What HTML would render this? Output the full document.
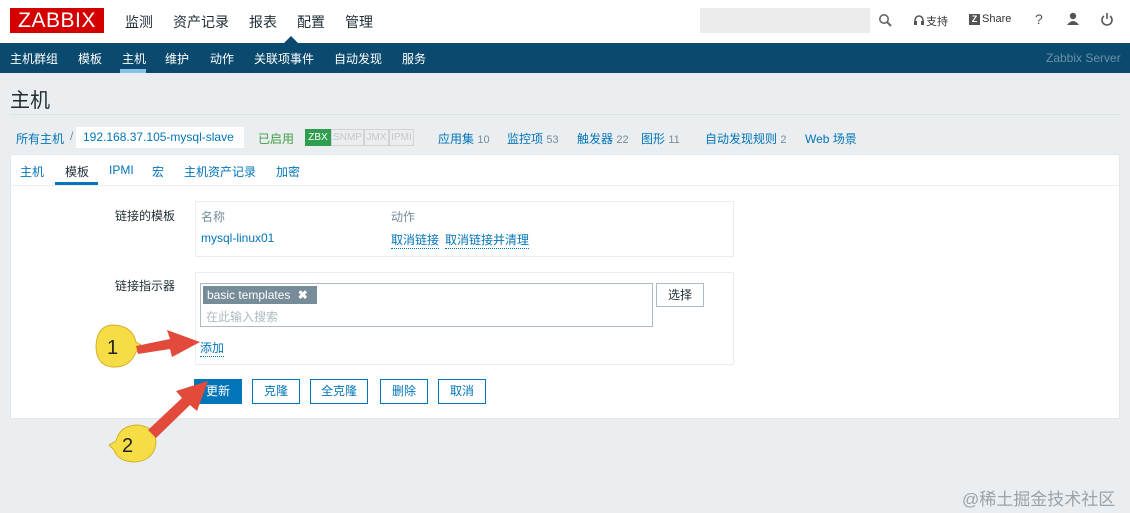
<!DOCTYPE html>
<html><head><meta charset="utf-8"><style>
*{margin:0;padding:0;box-sizing:border-box}
body{width:1130px;height:513px;background:#ebeef0;font-family:"Liberation Sans","Noto Sans CJK SC",sans-serif;font-size:12px;color:#1f2c33;position:relative;overflow:hidden}
.a{position:absolute}
.top{left:0;top:0;width:1130px;height:43px;background:#fff}
.logo{left:10px;top:8px;width:94px;height:25px;background:#d40000;color:#fff;font-size:21px;line-height:25px;text-align:center;letter-spacing:0.5px}
.mm{top:12px;font-size:14px;color:#1f2c33}
.nav{left:0;top:43px;width:1130px;height:30px;background:#0b4a6f}
.nv{top:50px;font-size:12px;color:#fff}
.blue{color:#0275b8}
.gray{color:#768d99}
.btn{top:379px;height:25px;border:1px solid #0275b8;color:#0275b8;background:#fff;font-size:12px;line-height:23px;text-align:center}
.lbl{font-size:12px;color:#1f2c33}
</style></head><body>
<div class="a top"></div>
<div class="a logo">ZABBIX</div>
<div class="a mm" style="left:125px">监测</div>
<div class="a mm" style="left:173px">资产记录</div>
<div class="a mm" style="left:249px">报表</div>
<div class="a mm" style="left:297px">配置</div>
<div class="a mm" style="left:345px">管理</div>
<div class="a" style="left:284px;top:36px;width:0;height:0;border-left:7px solid transparent;border-right:7px solid transparent;border-bottom:7px solid #0b4a6f"></div>
<div class="a" style="left:700px;top:8px;width:170px;height:25px;background:#ebebeb"></div>
<svg class="a" style="left:878px;top:13px" width="14" height="14"><circle cx="6" cy="6" r="4.2" stroke="#666" stroke-width="1.6" fill="none"/><line x1="9" y1="9" x2="13" y2="13" stroke="#666" stroke-width="2"/></svg>
<svg class="a" style="left:913px;top:14px" width="12" height="12"><path d="M2 8 V6 A4 4 0 0 1 10 6 V8" stroke="#555" stroke-width="1.5" fill="none"/><rect x="1" y="7" width="3" height="4" fill="#555"/><rect x="8" y="7" width="3" height="4" fill="#555"/></svg>
<div class="a" style="left:926px;top:13px;font-size:11px;color:#333">支持</div>
<div class="a" style="left:969px;top:14px;width:11px;height:11px;background:#555;color:#fff;font-size:9px;line-height:11px;text-align:center;font-weight:bold">Z</div>
<div class="a" style="left:982px;top:13px;font-size:11px;color:#333">Share</div>
<div class="a" style="left:1035px;top:11px;font-size:14px;color:#555">?</div>
<svg class="a" style="left:1066px;top:12px" width="14" height="14"><circle cx="7" cy="4" r="3.2" fill="#555"/><path d="M1 13 Q7 5 13 13Z" fill="#555"/></svg>
<svg class="a" style="left:1100px;top:12px" width="14" height="14"><path d="M4 4 A5 5 0 1 0 10 4" stroke="#555" stroke-width="1.6" fill="none"/><line x1="7" y1="1" x2="7" y2="7" stroke="#555" stroke-width="1.6"/></svg>
<div class="a nav"></div>
<div class="a nv" style="left:10px">主机群组</div>
<div class="a nv" style="left:78px">模板</div>
<div class="a nv" style="left:122px">主机</div>
<div class="a" style="left:120px;top:69px;width:26px;height:4px;background:#83c3e9"></div>
<div class="a nv" style="left:165px">维护</div>
<div class="a nv" style="left:210px">动作</div>
<div class="a nv" style="left:254px">关联项事件</div>
<div class="a nv" style="left:334px">自动发现</div>
<div class="a nv" style="left:402px">服务</div>
<div class="a nv" style="left:1046px;color:#6d8fa5;font-size:12px;top:51px">Zabbix Server</div>
<div class="a" style="left:10px;top:84px;font-size:20px;color:#1f2c33">主机</div>
<div class="a" style="left:10px;top:114px;width:1110px;height:1px;background:#dde2e5"></div>
<div class="a blue" style="left:16px;top:130px">所有主机</div>
<div class="a gray" style="left:70px;top:129px">/</div>
<div class="a" style="left:76px;top:127px;width:168px;height:21px;background:#fff;color:#0275b8;line-height:21px;padding-left:7px">192.168.37.105-mysql-slave</div>
<div class="a" style="left:258px;top:130px;color:#429e47">已启用</div>
<div class="a" style="left:305px;top:129px;height:17px;display:flex;font-size:10px;line-height:15px">
<span style="background:#2f9f4f;color:#fff;width:26px;text-align:center;border:1px solid #2f9f4f">ZBX</span>
<span style="border:1px solid #d3d3d3;color:#c7c7c7;width:33px;text-align:center">SNMP</span>
<span style="border:1px solid #d3d3d3;color:#c7c7c7;width:25px;text-align:center">JMX</span>
<span style="border:1px solid #d3d3d3;color:#c7c7c7;width:25px;text-align:center">IPMI</span></div>
<div class="a blue" style="left:438px;top:130px">应用集 <span class="gray" style="font-size:11px">10</span></div>
<div class="a blue" style="left:507px;top:130px">监控项 <span class="gray" style="font-size:11px">53</span></div>
<div class="a blue" style="left:577px;top:130px">触发器 <span class="gray" style="font-size:11px">22</span></div>
<div class="a blue" style="left:641px;top:130px">图形 <span class="gray" style="font-size:11px">11</span></div>
<div class="a blue" style="left:705px;top:130px">自动发现规则 <span class="gray" style="font-size:11px">2</span></div>
<div class="a blue" style="left:805px;top:130px">Web 场景</div>
<div class="a" style="left:10px;top:154px;width:1110px;height:265px;background:#fff;border:1px solid #e3e7ea"></div>
<div class="a" style="left:11px;top:185px;width:1108px;height:1px;background:#ebeef0"></div>
<div class="a blue" style="left:20px;top:163px">主机</div>
<div class="a" style="left:65px;top:163px">模板</div>
<div class="a" style="left:55px;top:182px;width:43px;height:3px;background:#0275b8"></div>
<div class="a blue" style="left:109px;top:163px">IPMI</div>
<div class="a blue" style="left:152px;top:163px">宏</div>
<div class="a blue" style="left:184px;top:163px">主机资产记录</div>
<div class="a blue" style="left:276px;top:163px">加密</div>
<div class="a lbl" style="left:115px;top:207px">链接的模板</div>
<div class="a" style="left:195px;top:201px;width:539px;height:56px;border:1px solid #ebeef0"></div>
<div class="a gray" style="left:201px;top:208px">名称</div>
<div class="a gray" style="left:391px;top:208px">动作</div>
<div class="a blue" style="left:201px;top:231px">mysql-linux01</div>
<div class="a blue" style="left:391px;top:231px;border-bottom:1px dotted #0275b8">取消链接</div>
<div class="a blue" style="left:445px;top:231px;border-bottom:1px dotted #0275b8">取消链接并清理</div>
<div class="a lbl" style="left:115px;top:277px">链接指示器</div>
<div class="a" style="left:195px;top:272px;width:539px;height:93px;border:1px solid #ebeef0"></div>
<div class="a" style="left:200px;top:283px;width:453px;height:44px;border:1px solid #acbbc2"></div>
<div class="a" style="left:203px;top:286px;width:114px;height:18px;background:#768d99;color:#fff;line-height:18px;padding-left:4px">basic templates <b style="margin-left:4px">✖</b></div>
<div class="a" style="left:206px;top:308px;color:#acbbc2">在此输入搜索</div>
<div class="a" style="left:656px;top:283px;width:48px;height:24px;border:1px solid #acbbc2;line-height:22px;text-align:center">选择</div>
<div class="a blue" style="left:200px;top:339px;border-bottom:1px dotted #0275b8">添加</div>
<div class="a btn" style="left:194px;width:48px;background:#0275b8;color:#fff">更新</div>
<div class="a btn" style="left:252px;width:48px">克隆</div>
<div class="a btn" style="left:310px;width:58px">全克隆</div>
<div class="a btn" style="left:380px;width:48px">删除</div>
<div class="a btn" style="left:438px;width:48px">取消</div>
<svg class="a" style="left:0;top:0" width="1130" height="513">
<path d="M112 325 Q132 325 136 342 L146 348 L136 352 Q130 368 112 367 Q96 365 96 346 Q97 326 112 325Z" fill="#f6dc45" stroke="#d2b12a"/>
<text x="107" y="354" font-family="Liberation Sans" font-size="20" fill="#222">1</text>
<path d="M136 346 L170 339 L167 330 L200 342 L172 357 L170 349 L138 354Z" fill="#e24a3b"/>
<path d="M138 425 Q156 427 156 443 Q154 460 136 462 Q118 462 114 450 L109 445 L116 441 Q120 425 138 425Z" fill="#f6dc45" stroke="#d2b12a"/>
<text x="122" y="452" font-family="Liberation Sans" font-size="20" fill="#222">2</text>
<path d="M148 430 L182 398 L176 391 L208 381 L197 411 L190 405 L156 438Z" fill="#e24a3b"/>
</svg>
<div class="a" style="left:962px;top:485px;font-size:17px;color:#9aa3a8">@稀土掘金技术社区</div>
</body></html>
